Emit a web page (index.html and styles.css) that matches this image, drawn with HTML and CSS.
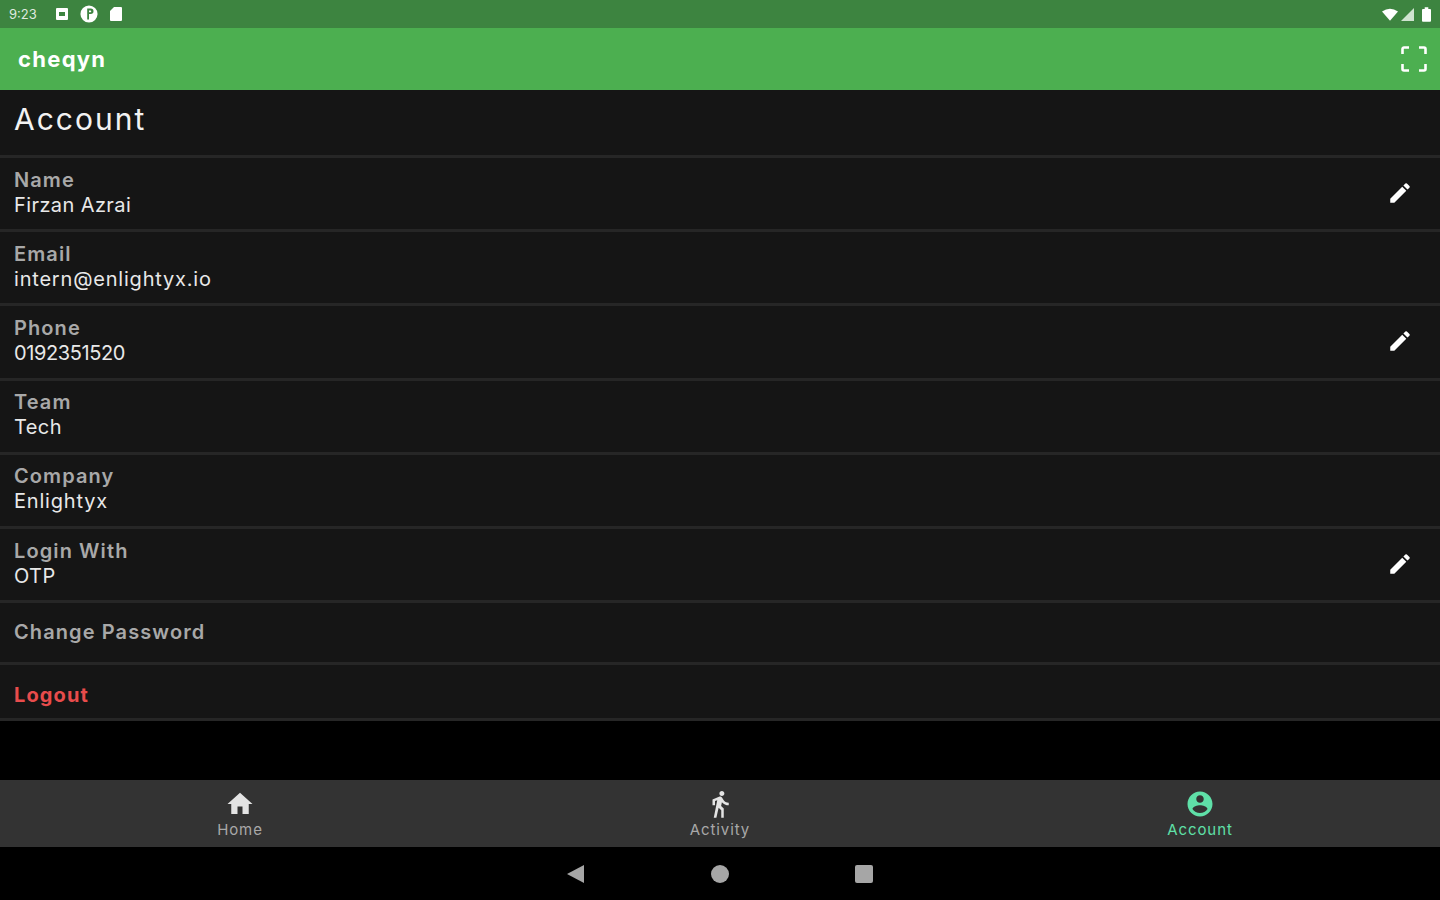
FILE: index.html
```html
<!DOCTYPE html>
<html lang="en">
<head>
    <meta charset="UTF-8">
    <title>cheqyn - Account</title>
    <link rel="stylesheet" href="styles.css">
</head>
<body>
    <div class="status-bar">
        <div class="status-left">
            <span class="clock">9:23</span>
            <svg width="14" height="14" viewBox="0 0 14 14"><path fill="#fff" fill-rule="evenodd" d="M2 1h10a1 1 0 0 1 1 1v10a1 1 0 0 1-1 1H2a1 1 0 0 1-1-1V2a1 1 0 0 1 1-1zm2 4v4h6V5z"/></svg>
            <svg width="18" height="18" viewBox="0 0 20 20"><circle cx="10" cy="10" r="9.500" fill="#fff"/><path fill="#3d8440" d="M8 4h2v12H8zM10 4h2a3 3 0 0 1 0 6h-2V8h1.500a1 1 0 0 0 0-2H10z"/></svg>
            <svg width="14" height="16" viewBox="0 0 14 16"><path fill="#fff" d="M5 1h7a1 1 0 0 1 1 1v12a1 1 0 0 1-1 1H2a1 1 0 0 1-1-1V5z"/></svg>
        </div>
        <div class="status-right">
            <svg width="16" height="13" viewBox="0 0 18 14"><path fill="#fff" d="M0 3.500Q9-2.500 18 3.500L9 14z"/></svg>
            <svg width="13" height="13" viewBox="0 0 14 14"><path fill="#cfe3d0" d="M14 0v14H0z"/></svg>
            <svg class="battery" width="9" height="15" viewBox="0 0 10 16"><path fill="#fff" d="M3 0h4v2h2a1 1 0 0 1 1 1v12a1 1 0 0 1-1 1H1a1 1 0 0 1-1-1V3a1 1 0 0 1 1-1h2z"/></svg>
        </div>
    </div>

    <header class="app-bar">
        <span class="brand">cheqyn</span>
        <svg width="26" height="26" viewBox="0 0 26 26"><path fill="none" stroke="#fff" stroke-width="2.600" d="M1.500 8V3a1.500 1.500 0 0 1 1.500-1.500h5M18 1.500h5A1.500 1.500 0 0 1 24.500 3v5M24.500 18v5a1.500 1.500 0 0 1-1.500 1.500h-5M8 24.500H3A1.500 1.500 0 0 1 1.500 23v-5"/></svg>
    </header>

    <main class="content">
        <h1 class="page-title">Account</h1>

        <div class="row">
            <div class="field"><span class="label">Name</span><span class="value">Firzan Azrai</span></div>
            <svg width="26" height="26" viewBox="0 0 24 24"><path fill="#fff" d="M3 17.250V21h3.750L17.810 9.940l-3.750-3.750zM20.710 7.040a1 1 0 0 0 0-1.410l-2.340-2.340a1 1 0 0 0-1.410 0l-1.830 1.830 3.750 3.750z"/></svg>
        </div>
        <div class="row">
            <div class="field"><span class="label">Email</span><span class="value value-wide">intern@enlightyx.io</span></div>
        </div>
        <div class="row">
            <div class="field"><span class="label">Phone</span><span class="value value-num">0192351520</span></div>
            <svg width="26" height="26" viewBox="0 0 24 24"><path fill="#fff" d="M3 17.250V21h3.750L17.810 9.940l-3.750-3.750zM20.710 7.040a1 1 0 0 0 0-1.410l-2.340-2.340a1 1 0 0 0-1.410 0l-1.830 1.830 3.750 3.750z"/></svg>
        </div>
        <div class="row">
            <div class="field"><span class="label">Team</span><span class="value">Tech</span></div>
        </div>
        <div class="row">
            <div class="field"><span class="label">Company</span><span class="value value-wide">Enlightyx</span></div>
        </div>
        <div class="row">
            <div class="field"><span class="label">Login With</span><span class="value">OTP</span></div>
            <svg width="26" height="26" viewBox="0 0 24 24"><path fill="#fff" d="M3 17.250V21h3.750L17.810 9.940l-3.750-3.750zM20.710 7.040a1 1 0 0 0 0-1.410l-2.340-2.340a1 1 0 0 0-1.410 0l-1.830 1.830 3.750 3.750z"/></svg>
        </div>
        <div class="row row-action">
            <span class="label">Change Password</span>
        </div>
        <div class="row row-logout">
            <span class="logout">Logout</span>
        </div>
    </main>

    <nav class="tabs">
        <div class="tab">
            <svg width="30" height="30" viewBox="0 0 24 24"><path fill="#e4e4e4" d="M10 20v-6h4v6h5v-8h3L12 3 2 12h3v8z"/></svg>
            <span>Home</span>
        </div>
        <div class="tab">
            <svg width="30" height="30" viewBox="0 0 24 24"><path fill="#e4e4e4" d="M13.500 5.500c1.100 0 2-.9 2-2s-.9-2-2-2-2 .9-2 2 .9 2 2 2zM9.800 8.900 7 23h2.100l1.800-8 2.100 2v6h2v-7.500l-2.100-2 .6-3C14.800 12 16.800 13 19 13v-2c-1.900 0-3.500-1-4.300-2.400l-1-1.600c-.4-.6-1-1-1.700-1-.3 0-.5.100-.8.100L6 8.300V13h2V9.600z"/></svg>
            <span>Activity</span>
        </div>
        <div class="tab tab-active">
            <svg width="32" height="32" viewBox="0 0 24 24"><path fill="#5fe0a8" d="M12 2C6.480 2 2 6.480 2 12s4.480 10 10 10 10-4.480 10-10S17.520 2 12 2zm0 3c1.660 0 3 1.340 3 3s-1.340 3-3 3-3-1.340-3-3 1.340-3 3-3zm0 14.200c-2.500 0-4.710-1.280-6-3.220.03-1.990 4-3.080 6-3.080 1.990 0 5.970 1.090 6 3.080-1.290 1.940-3.500 3.220-6 3.220z"/></svg>
            <span>Account</span>
        </div>
    </nav>

    <div class="system-nav">
        <svg width="18" height="20" viewBox="0 0 18 20"><path fill="#a6a6a6" d="M17 1v18L0 10z"/></svg>
        <svg width="18" height="18" viewBox="0 0 18 18"><circle cx="9" cy="9" r="9" fill="#a6a6a6"/></svg>
        <svg width="18" height="18" viewBox="0 0 18 18"><rect width="18" height="18" rx="2" fill="#a6a6a6"/></svg>
    </div>
</body>
</html>
```

FILE: styles.css
```css
* {
    margin: 0;
    padding: 0;
    box-sizing: border-box;
}
body {
    width: 1440px;
    height: 900px;
    display: flex;
    flex-direction: column;
    overflow: hidden;
    background-color: #000;
    color: #fff;
    font-family: Inter, "Open Sans", sans-serif;
}
svg {
    display: block;
}
.status-bar {
    height: 28px;
    padding: 0 9px;
    display: flex;
    justify-content: space-between;
    align-items: center;
    background-color: #3d8440;
}
.status-left, .status-right {
    display: flex;
    align-items: center;
}
.status-left {
    gap: 11px;
}
.status-right {
    gap: 3px;
}
.battery {
    margin-left: 5px;
}
.clock {
    width: 35px;
    font-size: 13px;
    color: #dfe9df;
}
.app-bar {
    height: 62px;
    padding: 0 13px 0 18px;
    display: flex;
    justify-content: space-between;
    align-items: center;
    background-color: #4caf50;
}
.brand {
    font-size: 22px;
    font-weight: 700;
    letter-spacing: 1.3px;
}
.content {
    flex: 1;
}
.page-title {
    height: 68px;
    padding: 10px 14px 0;
    font-size: 30px;
    font-weight: 400;
    line-height: 38px;
    letter-spacing: 2px;
    color: #f2f2f2;
    background-color: #151515;
    border-bottom: 3px solid #262626;
}
.row {
    height: 74.2px;
    padding: 0 27px 2px 14px;
    display: flex;
    justify-content: space-between;
    align-items: center;
    background-color: #151515;
    border-bottom: 3px solid #262626;
}
.field {
    display: flex;
    flex-direction: column;
}
.label {
    font-size: 20px;
    font-weight: 600;
    line-height: 25px;
    letter-spacing: 1.1px;
    color: #a8a8a8;
}
.value {
    font-size: 20px;
    line-height: 25px;
    letter-spacing: 0.4px;
    color: #e8e8e8;
}
.value-wide {
    letter-spacing: 0.8px;
}
.value-num {
    letter-spacing: -0.4px;
}
.row-action {
    height: 61.5px;
    padding-bottom: 0;
}
.row-logout {
    height: 56px;
    padding-top: 10px;
}
.logout {
    font-size: 20px;
    font-weight: 700;
    letter-spacing: 1.1px;
    color: #e84c4c;
}
.tabs {
    height: 67px;
    display: flex;
    background-color: #333;
}
.tab {
    flex: 1;
    padding-top: 9px;
    display: flex;
    flex-direction: column;
    align-items: center;
    gap: 2px;
    font-size: 15px;
    line-height: 18px;
    letter-spacing: 0.9px;
    color: #a8a8a8;
}
.tab svg {
    height: 30px;
}
.tab-active {
    color: #5fe0a8;
}
.system-nav {
    height: 53px;
    display: flex;
    justify-content: center;
    align-items: center;
    gap: 126px;
    background-color: #000;
}
```
